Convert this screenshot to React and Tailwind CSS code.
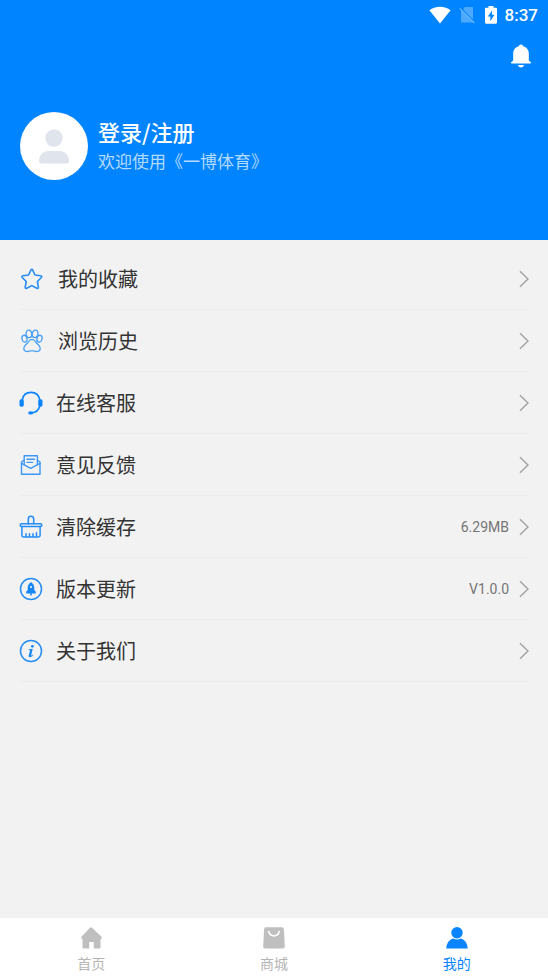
function WifiIcon() {
  return (
    <svg className="h-[18px] w-[22px]" viewBox="0 0 22 18" fill="#fff" aria-hidden="true">
      <path d="M11 17.600 .4 4.300C3.300 2 7 .7 11 .7s7.700 1.300 10.600 3.600z" />
    </svg>
  );
}

function NoSimIcon() {
  return (
    <svg className="h-[18px] w-4" viewBox="0 0 16 18" aria-hidden="true">
      <path d="M6 1h8v12.500L4 3.500zM2 4.200 14 16.500H2z" fill="#fff" fillOpacity=".3" />
      <path d="M.6 2.400 15.400 17" stroke="#fff" strokeOpacity=".4" strokeWidth="1.200" />
    </svg>
  );
}

function BatteryIcon() {
  return (
    <svg className="h-[18px] w-3" viewBox="0 0 12 18" aria-hidden="true">
      <path d="M3.500 0h5v1.800h2.300c.7 0 1.200.5 1.200 1.200v13.600c0 .7-.5 1.200-1.200 1.200H1.200C.5 17.800 0 17.300 0 16.600V3c0-.7.5-1.200 1.200-1.200h2.300z" fill="#fff" />
      <path d="M7.300 4.200 2.700 10.600h2.600v4.700l4.200-6.500H6.800z" fill="#0084ff" />
    </svg>
  );
}

function BellIcon() {
  return (
    <svg className="h-6 w-[22px]" viewBox="0 0 22 24" fill="#fff" aria-hidden="true">
      <path d="M11 .5c1.200 0 2 .8 2.200 1.700 3.600.9 5.600 3.700 5.600 7.300v6.300c0 .9.600 1.500 1.900 2.300.6.600.4 1.500-.5 1.500H1.800c-.9 0-1.100-.9-.5-1.500 1.300-.8 1.900-1.400 1.900-2.300V9.500c0-3.600 2-6.400 5.600-7.300C9 1.300 9.800.5 11 .5zM8 21h6c-.3 1.600-1.400 2.500-3 2.500S8.300 22.600 8 21z" />
    </svg>
  );
}

function StarIcon() {
  return (
    <svg className="h-6 w-6" viewBox="0 0 24 24" fill="none" stroke="#258df5" strokeWidth="1.600" strokeLinejoin="round" aria-hidden="true">
      <path d="M11 2.800Q11.800 1.600 12.600 2.800l2.400 5.200 5.700.8q1.700.4.700 1.700l-4 4 1 5.800q0 1.700-1.500 1l-5.100-2.700-5.100 2.700q-1.500.7-1.500-1l1-5.800-4-4q-1-1.300.7-1.700l5.700-.8z" />
    </svg>
  );
}

function PawIcon() {
  return (
    <svg className="h-6 w-6" viewBox="0 0 24 24" fill="none" stroke="#4aa0f5" strokeWidth="1.300" aria-hidden="true">
      <ellipse cx="8.900" cy="4.900" rx="2.800" ry="3.800" transform="rotate(-8 8.900 4.900)" />
      <ellipse cx="15.100" cy="4.900" rx="2.800" ry="3.800" transform="rotate(8 15.100 4.900)" />
      <ellipse cx="4.500" cy="9.700" rx="2.500" ry="3.500" transform="rotate(-15 4.500 9.700)" />
      <ellipse cx="19.500" cy="9.700" rx="2.500" ry="3.500" transform="rotate(15 19.500 9.700)" />
      <path d="M12 10.300c2.800 0 3.300 2.400 4.700 3.900 1.500 1.600 3.500 2.700 3.500 5.100 0 2-1.400 3.200-3.400 3.200-1.700 0-2.900-.8-4.800-.8s-3.100.8-4.800.8c-2 0-3.400-1.200-3.400-3.200 0-2.400 2-3.500 3.500-5.100 1.400-1.500 1.900-3.900 4.700-3.900z" />
    </svg>
  );
}

function HeadsetIcon() {
  return (
    <svg className="h-6 w-[22px] overflow-visible" viewBox="0 0 22 24" fill="none" stroke="#0a84ff" aria-hidden="true">
      <path d="M2.200 9C3 4.300 6.500 1.400 11 1.400S19 4.300 19.800 9M19.800 15c-1.100 4.200-3.900 6.600-8.300 6.900" strokeWidth="1.600" />
      <rect x="-.5" y="8.300" width="4.300" height="7.400" rx="1.700" fill="#0a84ff" stroke="none" />
      <rect x="18.200" y="8.300" width="4.300" height="7.400" rx="1.700" fill="#0a84ff" stroke="none" />
      <ellipse cx="10.600" cy="21.900" rx="2.500" ry="1.600" fill="#0a84ff" stroke="none" />
    </svg>
  );
}

function MailIcon() {
  return (
    <svg className="h-6 w-[22px]" viewBox="0 0 22 24" fill="none" stroke="#3c98f5" strokeWidth="1.400" strokeLinejoin="round" strokeLinecap="round" aria-hidden="true">
      <path d="M4 7.200 1.500 9v12.300h18.500V9l-2.500-1.800" />
      <path d="M1.500 10.300 10.700 15.300l9.300-5" />
      <path d="M4.200 11.500V2.800h13.200v8.700M7 6.200h7.500M7 9.400h5.500" />
    </svg>
  );
}

function BrushIcon() {
  return (
    <svg className="h-6 w-[22px] overflow-visible" viewBox="0 0 22 24" fill="none" stroke="#258df5" strokeWidth="1.500" strokeLinejoin="round" strokeLinecap="round" aria-hidden="true">
      <path d="M8.300 8.800V3.900C8.300 2.200 9.400 1.200 11 1.200s2.700 1 2.700 2.700v4.900" />
      <path d="M1.400 8.800h19.200q1.200 0 1.200 1.400 0 1.300-1.200 1.300H1.400q-1.200 0-1.200-1.300 0-1.400 1.200-1.400z" />
      <path d="M1.900 11.600v9q0 1.400 1.400 1.400h15.400q1.400 0 1.400-1.400v-9M6 18.700V22M9.500 18.700V22M13 18.700V22M16.500 17.700V22" />
    </svg>
  );
}

function RocketIcon() {
  return (
    <svg className="h-6 w-[22px] overflow-visible" viewBox="0 0 22 24" aria-hidden="true">
      <circle cx="11" cy="12" r="10.500" fill="none" stroke="#258df5" strokeWidth="1.500" />
      <path d="M11 5c2.100 1.500 3.300 3.500 3.300 5.800v2.200l1.500 1.700v1.800h-9.600v-1.800L7.700 13v-2.200C7.700 8.500 8.900 6.500 11 5z" fill="#1587f7" />
      <circle cx="11" cy="10" r="1.100" fill="#f2f2f2" />
      <path d="M11 15v3.500" stroke="#1587f7" strokeWidth="1.500" />
    </svg>
  );
}

function InfoIcon() {
  return (
    <svg className="h-6 w-[22px] overflow-visible" viewBox="0 0 22 24" aria-hidden="true">
      <circle cx="11" cy="12" r="10.500" fill="none" stroke="#258df5" strokeWidth="1.500" />
      <circle cx="12.400" cy="7.300" r="1.400" fill="#1587f7" />
      <path d="M8.800 10.300l4-.5-1.600 6.300c-.1.500.3.500 1.600-.6l.4.500c-1.500 1.800-2.600 2.400-3.600 2.200-1-.2-1.100-1-.8-2.100l1.200-4.300c.1-.6-.2-.8-1.300-.9z" fill="#1587f7" />
    </svg>
  );
}

function Chevron() {
  return (
    <svg className="h-[18px] w-[10px]" viewBox="0 0 10 18" fill="none" stroke="#a3a3a3" strokeWidth="1.500" aria-hidden="true">
      <path d="M1 1.300 9 9l-8 7.700" />
    </svg>
  );
}

function HomeIcon() {
  return (
    <svg className="h-6 w-6" viewBox="0 0 24 24" fill="#bfbfbf" aria-hidden="true">
      <path d="M11 1.700q1-.8 2 0l9.300 8.900q.6.700.4 1.900-.1.800-1.200.8v8q0 1.200-1.200 1.200h-5.500v-5.700q0-.8-.8-.8h-3q-.8 0-.8.800v5.700H4.700q-1.200 0-1.200-1.200v-8q-1.100 0-1.200-.8-.2-1.200.4-1.900z" />
    </svg>
  );
}

function ShopIcon() {
  return (
    <svg className="h-6 w-6" viewBox="0 0 24 24" aria-hidden="true">
      <path d="M4 1.200h16q1.700 0 1.900 1.700l.9 17.600q0 2-2 2H3.200q-2 0-2-2l.9-17.600Q2.300 1.200 4 1.200z" fill="#bfbfbf" />
      <path d="M6.700 5.600c.9 3 2.800 4.300 5.300 4.300s4.400-1.300 5.300-4.300" fill="none" stroke="#fff" strokeWidth="1.600" strokeLinecap="round" />
    </svg>
  );
}

function UserIcon() {
  return (
    <svg className="h-6 w-6" viewBox="0 0 24 24" fill="#0a84ff" aria-hidden="true">
      <circle cx="12" cy="6.800" r="5.700" />
      <path d="M1.300 22.500c.2-5.300 3-9 7-9.900 2.300 1.300 5.100 1.300 7.400 0 4 .9 6.800 4.600 7 9.900z" />
    </svg>
  );
}

const menu = [
  { label: "我的收藏", Icon: StarIcon },
  { label: "浏览历史", Icon: PawIcon },
  { label: "在线客服", Icon: HeadsetIcon },
  { label: "意见反馈", Icon: MailIcon },
  { label: "清除缓存", Icon: BrushIcon, value: "6.29MB" },
  { label: "版本更新", Icon: RocketIcon, value: "V1.0.0" },
  { label: "关于我们", Icon: InfoIcon },
];

const tabs = [
  { label: "首页", Icon: HomeIcon },
  { label: "商城", Icon: ShopIcon },
  { label: "我的", Icon: UserIcon, active: true },
];

export default function App() {
  return (
    <div className="flex min-h-screen flex-col bg-[#f2f2f2] font-['Noto_Sans_CJK_SC',sans-serif]">
      <header className="bg-[#0084ff] pb-[60px] text-white">
        <div className="flex h-[30px] items-center justify-end gap-2 pr-[10px]">
          <WifiIcon />
          <NoSimIcon />
          <span className="ml-[2px] flex">
            <BatteryIcon />
          </span>
          <span className="font-[Roboto,sans-serif] text-[17px] font-medium leading-5">8:37</span>
        </div>
        <div className="flex justify-end pt-[14px] pr-4">
          <button type="button" aria-label="消息" className="flex">
            <BellIcon />
          </button>
        </div>
        <button type="button" className="mt-11 ml-5 flex items-center gap-[10px] text-left">
          <svg className="h-[68px] w-[68px]" viewBox="0 0 68 68" aria-hidden="true">
            <circle cx="34" cy="34" r="34" fill="#fff" />
            <circle cx="34" cy="26" r="8.700" fill="#e0e4ed" />
            <path d="M19 49.500c0-6.500 4-10.500 10-10.500h10c6 0 10 4 10 10.500q0 2-2 2H21q-2 0-2-2z" fill="#e0e4ed" />
          </svg>
          <span className="flex flex-col gap-[2px]">
            <span className="text-[22px] font-medium leading-7">登录/注册</span>
            <span className="text-[17px] leading-7 text-[#b3daff]">欢迎使用《一博体育》</span>
          </span>
        </button>
      </header>

      <main className="flex-1 pt-2 pr-[19px] pl-5">
        <ul>
          {menu.map(({ label, Icon, value }) => (
            <li key={label} className="border-b border-[#ebebeb]">
              <button type="button" className="flex h-[61px] w-full items-center text-left">
                <Icon />
                <span className="ml-[14px] flex-1 text-[20px] leading-7 text-[#333]">{label}</span>
                {value && (
                  <span className="mr-[10px] font-[Roboto,sans-serif] text-[14px] leading-5 text-[#757575]">{value}</span>
                )}
                <Chevron />
              </button>
            </li>
          ))}
        </ul>
      </main>

      <nav className="grid h-[60px] grid-cols-3 bg-white">
        {tabs.map(({ label, Icon, active }) => (
          <a
            key={label}
            href="#"
            aria-current={active ? "page" : undefined}
            className={`flex flex-col items-center pt-2 text-[14px] leading-5 ${active ? "text-[#0a84ff]" : "text-[#b5b5b5]"}`}
          >
            <Icon />
            <span className="mt-[3px]">{label}</span>
          </a>
        ))}
      </nav>
    </div>
  );
}
